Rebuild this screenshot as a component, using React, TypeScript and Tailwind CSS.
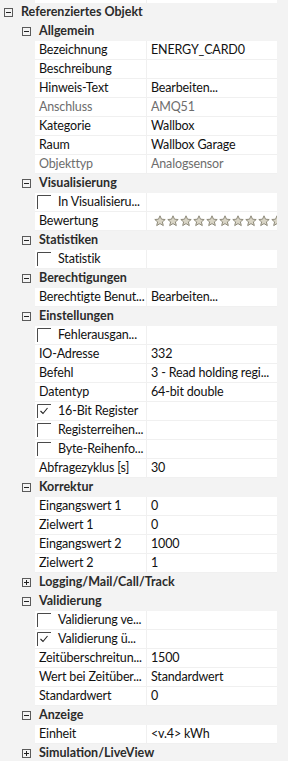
import React from "react";

type Row =
  | { t: "top"; label: string; open: boolean }
  | { t: "group"; label: string; open: boolean }
  | { t: "prop"; label: string; value?: string; disabled?: boolean }
  | { t: "check"; label: string; checked: boolean; value?: string }
  | { t: "stars"; label: string };

const rows: Row[] = [
  { t: "top", label: "Referenziertes Objekt", open: true },
  { t: "group", label: "Allgemein", open: true },
  { t: "prop", label: "Bezeichnung", value: "ENERGY_CARD0" },
  { t: "prop", label: "Beschreibung", value: "" },
  { t: "prop", label: "Hinweis-Text", value: "Bearbeiten..." },
  { t: "prop", label: "Anschluss", value: "AMQ51", disabled: true },
  { t: "prop", label: "Kategorie", value: "Wallbox" },
  { t: "prop", label: "Raum", value: "Wallbox Garage" },
  { t: "prop", label: "Objekttyp", value: "Analogsensor", disabled: true },
  { t: "group", label: "Visualisierung", open: true },
  { t: "check", label: "In Visualisieru...", checked: false },
  { t: "stars", label: "Bewertung" },
  { t: "group", label: "Statistiken", open: true },
  { t: "check", label: "Statistik", checked: false },
  { t: "group", label: "Berechtigungen", open: true },
  { t: "prop", label: "Berechtigte Benut...", value: "Bearbeiten..." },
  { t: "group", label: "Einstellungen", open: true },
  { t: "check", label: "Fehlerausgan...", checked: false },
  { t: "prop", label: "IO-Adresse", value: "332" },
  { t: "prop", label: "Befehl", value: "3 - Read holding regi..." },
  { t: "prop", label: "Datentyp", value: "64-bit double" },
  { t: "check", label: "16-Bit Register", checked: true },
  { t: "check", label: "Registerreihen...", checked: false },
  { t: "check", label: "Byte-Reihenfo...", checked: false },
  { t: "prop", label: "Abfragezyklus [s]", value: "30" },
  { t: "group", label: "Korrektur", open: true },
  { t: "prop", label: "Eingangswert 1", value: "0" },
  { t: "prop", label: "Zielwert 1", value: "0" },
  { t: "prop", label: "Eingangswert 2", value: "1000" },
  { t: "prop", label: "Zielwert 2", value: "1" },
  { t: "group", label: "Logging/Mail/Call/Track", open: false },
  { t: "group", label: "Validierung", open: true },
  { t: "check", label: "Validierung ve...", checked: false },
  { t: "check", label: "Validierung ü...", checked: true },
  { t: "prop", label: "Zeitüberschreitun...", value: "1500" },
  { t: "prop", label: "Wert bei Zeitüber...", value: "Standardwert" },
  { t: "prop", label: "Standardwert", value: "0" },
  { t: "group", label: "Anzeige", open: true },
  { t: "prop", label: "Einheit", value: "<v.4> kWh" },
  { t: "group", label: "Simulation/LiveView", open: false },
];

function Toggle({ open }: { open: boolean }) {
  return (
    <svg width="9" height="9" viewBox="0 0 9 9" className="shrink-0">
      <rect x="0.5" y="0.5" width="8" height="8" fill="none" stroke="#5a5a5a" />
      <line x1="2" y1="4.5" x2="7" y2="4.5" stroke="#222" />
      {!open && <line x1="4.5" y1="2" x2="4.5" y2="7" stroke="#222" />}
    </svg>
  );
}

function CheckBox({ checked }: { checked: boolean }) {
  return (
    <svg width="14" height="14" viewBox="0 0 14 14" className="shrink-0">
      <path d="M0.5 14 V0.5 H14" fill="none" stroke="#4a4a4a" />
      {checked && (
        <path d="M3.5 7 L6 9.5 L10.5 4" fill="none" stroke="#222" strokeWidth="1.1" />
      )}
    </svg>
  );
}

function Star() {
  return (
    <svg width="12" height="12" viewBox="0 0 12 12" className="shrink-0">
      <path
        d="M6 0.8 L7.5 4.2 L11.2 4.5 L8.4 6.9 L9.3 10.6 L6 8.6 L2.7 10.6 L3.6 6.9 L0.8 4.5 L4.5 4.2 Z"
        fill="#d9d5c6"
        stroke="#8e8a7a"
        strokeWidth="1"
        strokeLinejoin="round"
      />
    </svg>
  );
}

export default function App() {
  return (
    <div
      className="w-[288px] h-[761px] overflow-hidden bg-[#f3f3f3] text-[12.5px] tracking-[-0.15px] text-[#111]"
      style={{ fontFamily: "Lato, 'Noto Sans', sans-serif" }}
    >
      <div className="flex h-[3px]">
        <div className="w-[35px]" />
        <div className="w-[111px] bg-white" />
        <div className="w-px bg-[#f0f0f0]" />
        <div className="w-[130px] bg-white" />
      </div>
      {rows.map((r, i) => {
        if (r.t === "top") {
          return (
            <div key={i} className="flex h-[19px] items-center pl-[4px]">
              <Toggle open={r.open} />
              <span className="ml-[8px] font-bold text-[#2b2b2b] whitespace-nowrap tracking-normal">{r.label}</span>
            </div>
          );
        }
        if (r.t === "group") {
          return (
            <div key={i} className="flex h-[19px] items-center pl-[22px]">
              <Toggle open={r.open} />
              <span className="ml-[8px] font-bold text-[#2b2b2b] whitespace-nowrap tracking-normal">{r.label}</span>
            </div>
          );
        }
        const dis = r.t === "prop" && r.disabled;
        return (
          <div key={i} className="flex h-[19px]">
            <div className="w-[35px] shrink-0" />
            <div
              className={
                "w-[111px] shrink-0 bg-white border-b border-[#f0f0f0] flex items-center overflow-hidden whitespace-nowrap " +
                (r.t === "check" ? "pl-[2px]" : "pl-[4px]")
              }
            >
              {r.t === "check" && (
                <span className="mr-[7px] flex">
                  <CheckBox checked={r.checked} />
                </span>
              )}
              <span className={dis ? "text-[#6d6d6d]" : ""}>{r.label}</span>
            </div>
            <div className="w-px shrink-0 bg-[#f0f0f0]" />
            <div className="w-[130px] shrink-0 bg-white border-b border-[#f0f0f0] flex items-center overflow-hidden whitespace-nowrap pl-[4px]">
              {r.t === "stars" ? (
                <div className="flex gap-[1px] pl-[3px]">
                  {Array.from({ length: 10 }).map((_, k) => (
                    <Star key={k} />
                  ))}
                </div>
              ) : r.t === "prop" ? (
                <span className={dis ? "text-[#6d6d6d]" : ""}>{r.value}</span>
              ) : null}
            </div>
          </div>
        );
      })}
    </div>
  );
}
